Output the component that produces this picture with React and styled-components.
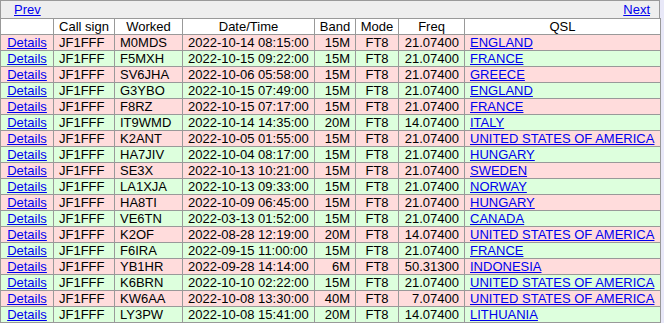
import React from "react";
import styled, { createGlobalStyle } from "styled-components";

const GlobalStyle = createGlobalStyle`
  body {
    margin: 0;
    background: #e8e8f8;
    font-family: "Liberation Sans", Arial, sans-serif;
    font-size: 13px;
  }
`;

//styled components
const Wrapper = styled.div`
  width: 660px;
`;

const NavBar = styled.div`
  display: flex;
  justify-content: space-between;
  align-items: center;
  height: 17px;
  padding: 0 9px 0 13px;
  background: #eeeeee;
  border: 1px solid #999;
  border-bottom: none;
  line-height: 15px;
`;

const NavLink = styled.a`
  color: #0000ee;
  text-decoration: underline;
  cursor: pointer;
`;

const Table = styled.table`
  width: 660px;
  border-collapse: collapse;
  table-layout: fixed;
  border: 1px solid #999;
`;

const HeadCell = styled.th`
  font-weight: normal;
  background: #ffffff;
  border: 1px solid #999;
  padding: 0;
  height: 15px;
  line-height: 15px;
  text-align: center;
  color: #000;
  white-space: nowrap;
`;

const Row = styled.tr`
  background: ${(p) => (p.$odd ? "#ddffdd" : "#ffdcdc")};
`;

const Cell = styled.td`
  border: 1px solid #999;
  padding: ${(p) => (p.$align === "right" ? "0 5px 0 0" : p.$align === "center" ? "0" : "0 0 0 5px")};
  height: 15px;
  line-height: 15px;
  text-align: ${(p) => p.$align || "left"};
  color: #000;
  white-space: nowrap;
  overflow: hidden;
`;

const RowLink = styled.a`
  color: #0000ee;
  text-decoration: underline;
  cursor: pointer;
`;

const columns = [
  { title: "", width: 53 },
  { title: "Call sign", width: 61 },
  { title: "Worked", width: 68 },
  { title: "Date/Time", width: 132 },
  { title: "Band", width: 41 },
  { title: "Mode", width: 43 },
  { title: "Freq", width: 66 },
  { title: "QSL", width: 196 },
];

const rows = [
  ["M0MDS", "2022-10-14 08:15:00", "15M", "21.07400", "ENGLAND"],
  ["F5MXH", "2022-10-15 09:22:00", "15M", "21.07400", "FRANCE"],
  ["SV6JHA", "2022-10-06 05:58:00", "15M", "21.07400", "GREECE"],
  ["G3YBO", "2022-10-15 07:49:00", "15M", "21.07400", "ENGLAND"],
  ["F8RZ", "2022-10-15 07:17:00", "15M", "21.07400", "FRANCE"],
  ["IT9WMD", "2022-10-14 14:35:00", "20M", "14.07400", "ITALY"],
  ["K2ANT", "2022-10-05 01:55:00", "15M", "21.07400", "UNITED STATES OF AMERICA"],
  ["HA7JIV", "2022-10-04 08:17:00", "15M", "21.07400", "HUNGARY"],
  ["SE3X", "2022-10-13 10:21:00", "15M", "21.07400", "SWEDEN"],
  ["LA1XJA", "2022-10-13 09:33:00", "15M", "21.07400", "NORWAY"],
  ["HA8TI", "2022-10-09 06:45:00", "15M", "21.07400", "HUNGARY"],
  ["VE6TN", "2022-03-13 01:52:00", "15M", "21.07400", "CANADA"],
  ["K2OF", "2022-08-28 12:19:00", "20M", "14.07400", "UNITED STATES OF AMERICA"],
  ["F6IRA", "2022-09-15 11:00:00", "15M", "21.07400", "FRANCE"],
  ["YB1HR", "2022-09-28 14:14:00", "6M", "50.31300", "INDONESIA"],
  ["K6BRN", "2022-10-10 02:22:00", "15M", "21.07400", "UNITED STATES OF AMERICA"],
  ["KW6AA", "2022-10-08 13:30:00", "40M", "7.07400", "UNITED STATES OF AMERICA"],
  ["LY3PW", "2022-10-08 15:41:00", "20M", "14.07400", "LITHUANIA"],
];

export default function App() {
  return (
    <Wrapper>
      <GlobalStyle />
      <NavBar>
        <NavLink>Prev</NavLink>
        <NavLink>Next</NavLink>
      </NavBar>
      <Table>
        <colgroup>
          {columns.map((c, i) => (
            <col key={i} style={{ width: c.width }} />
          ))}
        </colgroup>
        <thead>
          <tr>
            {columns.map((c, i) => (
              <HeadCell key={i}>{c.title}</HeadCell>
            ))}
          </tr>
        </thead>
        <tbody>
          {rows.map((r, i) => (
            <Row key={i} $odd={i % 2 === 1}>
              <Cell $align="center">
                <RowLink>Details</RowLink>
              </Cell>
              <Cell>JF1FFF</Cell>
              <Cell>{r[0]}</Cell>
              <Cell>{r[1]}</Cell>
              <Cell $align="right">{r[2]}</Cell>
              <Cell $align="center">FT8</Cell>
              <Cell $align="right">{r[3]}</Cell>
              <Cell>
                <RowLink>{r[4]}</RowLink>
              </Cell>
            </Row>
          ))}
        </tbody>
      </Table>
    </Wrapper>
  );
}
